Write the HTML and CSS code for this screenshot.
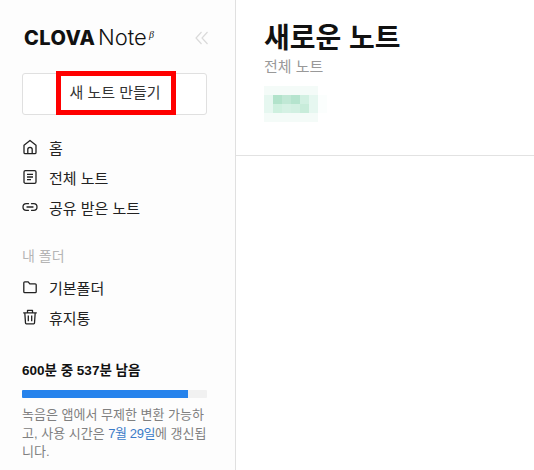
FILE: index.html
```html
<!DOCTYPE html>
<html lang="ko">
    <head>
        <meta charset="utf-8">
        <title>CLOVA Note</title>
        <link rel="stylesheet" href="styles.css">
    </head>
    <body>
        <div class="app">
            <aside class="sidebar">
                <div class="brand">
                    <div class="logo"><b>CLOVA</b> <span>Note</span><i>β</i></div>
                    <svg class="collapse" width="14" height="14" viewBox="0 0 14 14" fill="none" stroke="#dadada" stroke-width="1.2">
                        <path d="M6.5 1 1 7l5.5 6M12.5 1 7 7l5.5 6"/>
                    </svg>
                </div>
                <div class="new-wrap">
                    <button class="new-note"><span class="highlight">새 노트 만들기</span></button>
                </div>
                <nav class="menu">
                    <a class="item">
                        <svg width="16" height="16" viewBox="0 0 16 16" fill="none" stroke="#222" stroke-width="1.3" stroke-linejoin="round">
                            <path d="M2 6.2 8 1.5l6 4.7v7.2a1.2 1.2 0 0 1-1.2 1.2H3.2A1.2 1.2 0 0 1 2 13.4z"/>
                            <path d="M5.8 14.5v-4a2.2 2.2 0 0 1 4.4 0v4"/>
                        </svg>
                        홈
                    </a>
                    <a class="item">
                        <svg width="16" height="16" viewBox="0 0 16 16" fill="none" stroke="#222" stroke-width="1.3">
                            <rect x="2" y="1.7" width="12" height="12.6" rx="1.4"/>
                            <path d="M5 5.3h6M5 8h6M5 10.7h4"/>
                        </svg>
                        전체 노트
                    </a>
                    <a class="item">
                        <svg width="16" height="16" viewBox="0 0 16 16" fill="none" stroke="#222" stroke-width="1.3" stroke-linecap="round">
                            <path d="M6.5 4.7H4.3a3.3 3.3 0 0 0 0 6.6h2.2M9.5 4.7h2.2a3.3 3.3 0 0 1 0 6.6H9.5M5 8h6"/>
                        </svg>
                        공유 받은 노트
                    </a>
                </nav>
                <div class="folder-title">내 폴더</div>
                <nav class="menu">
                    <a class="item">
                        <svg width="16" height="16" viewBox="0 0 16 16" fill="none" stroke="#222" stroke-width="1.3" stroke-linejoin="round">
                            <path d="M1.8 3.8c0-.6.5-1 1-1h3.4l1.6 2h5.4c.6 0 1 .4 1 1v6.9c0 .6-.4 1-1 1H2.8c-.5 0-1-.4-1-1z"/>
                        </svg>
                        기본폴더
                    </a>
                    <a class="item">
                        <svg width="16" height="16" viewBox="0 0 16 16" fill="none" stroke="#222" stroke-width="1.3" stroke-linejoin="round">
                            <path d="M1.2 3.8h13.6M5.5 3.6V1.4h5v2.2M2.8 3.8l.7 10.2c0 .5.4.8.8.8h7.4c.4 0 .8-.3.8-.8l.7-10.2M6.3 6.5v5.8M9.7 6.5v5.8"/>
                        </svg>
                        휴지통
                    </a>
                </nav>
                <div class="usage">
                    <div class="usage-title">600분 중 537분 남음</div>
                    <div class="bar"><div class="bar-fill" style="width: 89.5%"></div></div>
                    <p class="usage-text">녹음은 앱에서 무제한 변환 가능하고, 사용 시간은 <em>7월 29일</em>에 갱신됩니다.</p>
                </div>
            </aside>
            <main class="content">
                <header class="head">
                    <h1>새로운 노트</h1>
                    <div class="sub">전체 노트</div>
                    <svg class="blur" width="63" height="36" viewBox="0 0 7 4" shape-rendering="crispEdges">
                        <rect width="6" height="4" fill="#f4fbf8"/>
                        <rect y="1" width="1" height="2" fill="#e6f7f0"/>
                        <rect x="1" y="1" width="1" height="1" fill="#b2e3cb"/>
                        <rect x="2" y="1" width="1" height="1" fill="#c0e8d5"/>
                        <rect x="3" y="1" width="1" height="1" fill="#b5e4ce"/>
                        <rect x="4" y="1" width="1" height="1" fill="#d2f0e2"/>
                        <rect x="5" y="1" width="1" height="2" fill="#e6f7f0"/>
                        <rect x="6" y="1" width="1" height="2" fill="#fbfefd"/>
                        <rect x="1" y="2" width="1" height="1" fill="#cef0df"/>
                        <rect x="2" y="2" width="1" height="1" fill="#d5f1e4"/>
                        <rect x="3" y="2" width="1" height="1" fill="#d2f0e2"/>
                        <rect x="4" y="2" width="1" height="1" fill="#c8ecda"/>
                    </svg>
                </header>
            </main>
        </div>
    </body>
</html>
```

FILE: styles.css
```css
html,
body {
    margin: 0;
    height: 100%;
    overflow: hidden;
}

body {
    font-family: "Liberation Sans", "Noto Sans CJK KR", sans-serif;
    color: #222;
    background: #fff;
}

.app {
    display: flex;
    height: 470px;
}

.sidebar {
    width: 236px;
    box-sizing: border-box;
    flex-shrink: 0;
    padding: 0 28px 0 22px;
    background: #fdfdfd;
    border-right: 1px solid #e0e0e0;
}

.brand {
    display: flex;
    align-items: center;
    justify-content: space-between;
    height: 73px;
    padding: 0 0 0 2px;
    box-sizing: border-box;
}

.logo {
    font-family: Inter, sans-serif;
    font-size: 20px;
    color: #111;
    white-space: nowrap;
    margin-top: 1px;
}

.logo b {
    font-weight: 800;
    letter-spacing: 0.4px;
}

.logo span {
    margin-left: -3px;
    font-size: 22px;
    font-weight: 300;
}

.logo i {
    font-family: "Liberation Serif", serif;
    font-size: 10px;
    vertical-align: 7px;
    margin-left: 2px;
}

.collapse {
    margin-top: 3px;
    margin-right: -2px;
}

.new-note {
    display: block;
    width: 185px;
    height: 42px;
    padding: 0;
    background: #fff;
    border: 1px solid #e0e0e0;
    border-radius: 3px;
    font: inherit;
    font-size: 15px;
    color: #333;
    position: relative;
}

/* red box from the annotated screenshot */
.highlight {
    position: absolute;
    left: 33px;
    top: -3px;
    width: 120px;
    height: 44px;
    box-sizing: border-box;
    border: 5px solid #f00;
    padding-right: 2px;
    line-height: 34px;
    text-align: center;
    background: #fff;
}

.menu {
    display: flex;
    flex-direction: column;
}

.new-wrap + .menu {
    margin-top: 17px;
}

.item {
    display: flex;
    align-items: center;
    gap: 11px;
    height: 30px;
    font-size: 15px;
    color: #222;
}

.folder-title {
    margin-top: 19px;
    height: 30px;
    line-height: 30px;
    font-size: 14px;
    color: #b5b5b5;
}

.folder-title + .menu {
    margin-top: 1px;
}

.usage {
    margin-top: 29px;
}

.usage-title {
    font-size: 13.5px;
    font-weight: 700;
    color: #111;
    line-height: 20px;
}

.bar {
    width: 185px;
    height: 8px;
    margin-top: 9px;
    border-radius: 1px;
    background: #f1f1f1;
}

.bar-fill {
    height: 100%;
    border-radius: 1px 0 0 1px;
    background: #2683ec;
}

.usage-text {
    width: 187px;
    margin: 8px 0 0;
    font-size: 13px;
    line-height: 18.5px;
    color: #808080;
    word-break: break-all;
}

.usage-text em {
    font-style: normal;
    letter-spacing: -0.4px;
    color: #3b7bc8;
}

.content {
    flex: 1;
    min-width: 0;
}

.head {
    height: 156px;
    box-sizing: border-box;
    padding: 22px 0 0 28px;
    border-bottom: 1px solid #e2e2e2;
}

.head h1 {
    margin: 0;
    font-size: 28px;
    line-height: 34px;
    font-weight: 700;
    color: #111;
}

.sub {
    margin-top: 1px;
    font-size: 15px;
    line-height: 20px;
    color: #999;
}

.blur {
    display: block;
    margin-top: 9px;
}
```
